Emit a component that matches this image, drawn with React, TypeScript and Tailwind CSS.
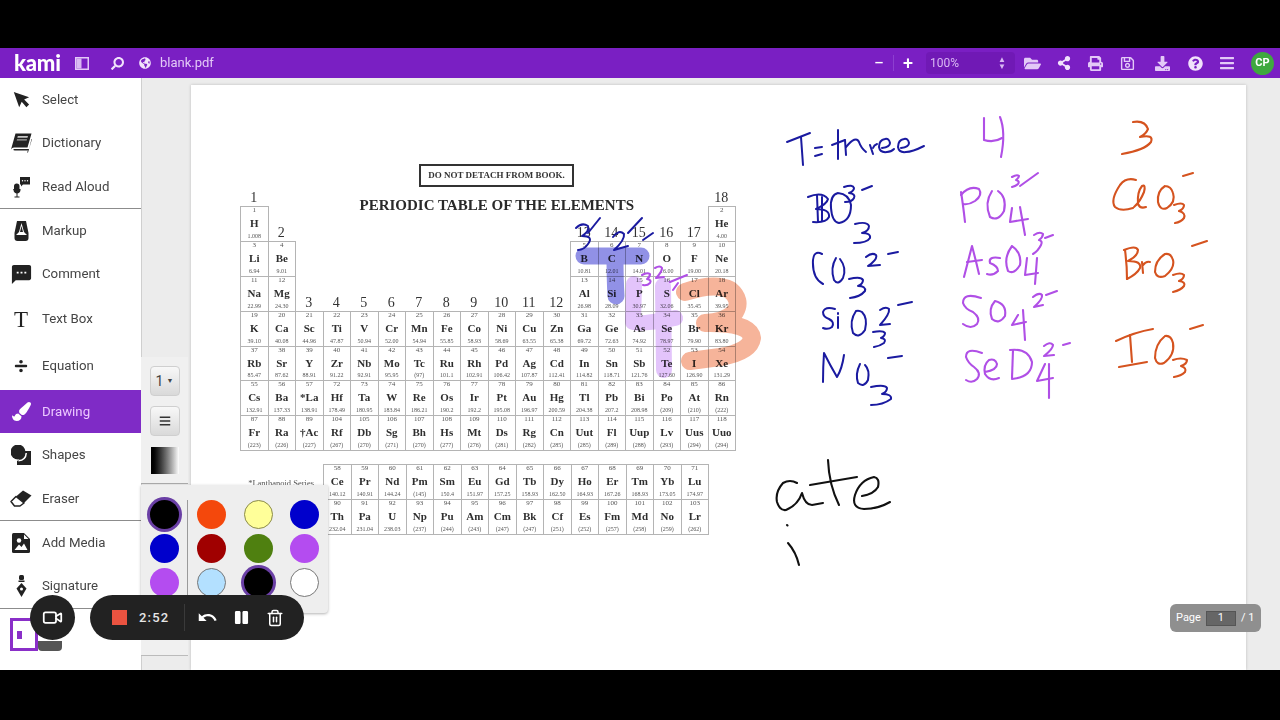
import React from "react";
import {
  FaBars,
  FaDivide,
  FaDownload,
  FaFolderOpen,
  FaGlobeAmericas,
  FaPaintBrush,
  FaPause,
  FaPrint,
  FaQuestionCircle,
  FaRegSave,
  FaSearch,
  FaShareAlt,
} from "react-icons/fa";
import { MdSms, MdUndo } from "react-icons/md";
import { Trash2, Video } from "lucide-react";

// element rows of the table: grid row, first grid column, then "number symbol mass"
const TABLE: { row: number; col: number; els: string[] }[] = [
  { row: 2, col: 1, els: ["1 H 1.008"] },
  { row: 2, col: 18, els: ["2 He 4.00"] },
  { row: 3, col: 1, els: ["3 Li 6.94", "4 Be 9.01"] },
  { row: 3, col: 13, els: ["5 B 10.81", "6 C 12.01", "7 N 14.01", "8 O 16.00", "9 F 19.00", "10 Ne 20.18"] },
  { row: 4, col: 1, els: ["11 Na 22.99", "12 Mg 24.30"] },
  { row: 4, col: 13, els: ["13 Al 26.98", "14 Si 28.09", "15 P 30.97", "16 S 32.06", "17 Cl 35.45", "18 Ar 39.95"] },
  {
    row: 5,
    col: 1,
    els: ["19 K 39.10", "20 Ca 40.08", "21 Sc 44.96", "22 Ti 47.87", "23 V 50.94", "24 Cr 52.00", "25 Mn 54.94", "26 Fe 55.85", "27 Co 58.93", "28 Ni 58.69", "29 Cu 63.55", "30 Zn 65.38", "31 Ga 69.72", "32 Ge 72.63", "33 As 74.92", "34 Se 78.97", "35 Br 79.90", "36 Kr 83.80"],
  },
  {
    row: 6,
    col: 1,
    els: ["37 Rb 85.47", "38 Sr 87.62", "39 Y 88.91", "40 Zr 91.22", "41 Nb 92.91", "42 Mo 95.95", "43 Tc (97)", "44 Ru 101.1", "45 Rh 102.91", "46 Pd 106.42", "47 Ag 107.87", "48 Cd 112.41", "49 In 114.82", "50 Sn 118.71", "51 Sb 121.76", "52 Te 127.60", "53 I 126.90", "54 Xe 131.29"],
  },
  {
    row: 7,
    col: 1,
    els: ["55 Cs 132.91", "56 Ba 137.33", "57 *La 138.91", "72 Hf 178.49", "73 Ta 180.95", "74 W 183.84", "75 Re 186.21", "76 Os 190.2", "77 Ir 192.2", "78 Pt 195.08", "79 Au 196.97", "80 Hg 200.59", "81 Tl 204.38", "82 Pb 207.2", "83 Bi 208.98", "84 Po (209)", "85 At (210)", "86 Rn (222)"],
  },
  {
    row: 8,
    col: 1,
    els: ["87 Fr (223)", "88 Ra (226)", "89 †Ac (227)", "104 Rf (267)", "105 Db (270)", "106 Sg (271)", "107 Bh (270)", "108 Hs (277)", "109 Mt (276)", "110 Ds (281)", "111 Rg (282)", "112 Cn (285)", "113 Uut (285)", "114 Fl (289)", "115 Uup (288)", "116 Lv (293)", "117 Uus (294)", "118 Uuo (294)"],
  },
];

const SERIES: { row: number; col: number; els: string[] }[] = [
  {
    row: 1,
    col: 2,
    els: ["58 Ce 140.12", "59 Pr 140.91", "60 Nd 144.24", "61 Pm (145)", "62 Sm 150.4", "63 Eu 151.97", "64 Gd 157.25", "65 Tb 158.93", "66 Dy 162.50", "67 Ho 164.93", "68 Er 167.26", "69 Tm 168.93", "70 Yb 173.05", "71 Lu 174.97"],
  },
  {
    row: 2,
    col: 2,
    els: ["90 Th 232.04", "91 Pa 231.04", "92 U 238.03", "93 Np (237)", "94 Pu (244)", "95 Am (243)", "96 Cm (247)", "97 Bk (247)", "98 Cf (251)", "99 Es (252)", "100 Fm (257)", "101 Md (258)", "102 No (259)", "103 Lr (262)"],
  },
];

const GROUP_LABELS: [string, number, number][] = [
  ["1", 1, 1],
  ["18", 1, 18],
  ["2", 2, 2],
  ["13", 2, 13],
  ["14", 2, 14],
  ["15", 2, 15],
  ["16", 2, 16],
  ["17", 2, 17],
  ["3", 4, 3],
  ["4", 4, 4],
  ["5", 4, 5],
  ["6", 4, 6],
  ["7", 4, 7],
  ["8", 4, 8],
  ["9", 4, 9],
  ["10", 4, 10],
  ["11", 4, 11],
  ["12", 4, 12],
];

// highlighter strokes, multiplied over the table so its text stays dark
const HIGHLIGHTS: { color: string; width: number; paths: string[] }[] = [
  { color: "#9191e6", width: 17, paths: ["M584 256 L641 256", "M615 256 Q615 280 616 296"] },
  { color: "#e3c4fb", width: 16, paths: ["M634 284 L633 322 Q640 325 675 318", "M663 286 L664 370"] },
  {
    color: "#f6b49a",
    width: 18,
    paths: ["M685 292 Q715 282 730 290 Q742 300 735 312 Q725 322 705 323 Q750 322 752 338 Q750 352 720 357 L690 361"],
  },
];

// pen strokes on the pdf, in page coordinates
const INK: { color: string; width: number; paths: string[] }[] = [
  {
    color: "#1a1aa0",
    width: 2,
    paths: [
      // marks over the table
      "M576 228 q6 -6 12 -2 q2 5 -6 10 q12 0 6 8 q-4 6 -10 6",
      "M588 233 L600 218",
      "M613 237 q6 -8 11 -3 q1 6 -10 16 l14 -4",
      "M628 233 L642 218",
      "M643 240 L653 233",
      // T=three
      "M787 142 L810 133",
      "M801 137 L803 165",
      "M815 148 L822 147",
      "M815 156 L822 154",
      "M838 130 L838 159",
      "M832 145 L845 140",
      "M845 140 L846 155",
      "M846 147 q10 -12 13 -5 q2 6 7 10",
      "M870 145 L873 154",
      "M873 148 q1 -3 4 -4",
      "M882 148 q8 -1 8 -5 q-1 -5 -5 -4 q-6 1 -6 8 q1 6 8 5 q4 0 7 -3",
      "M901 148 q8 -1 8 -5 q-1 -5 -5 -4 q-6 1 -6 8 q1 6 8 5 q6 0 18 -6",
      // BO3
      "M808 197 q14 -6 20 2 q-1 5 -12 10 q14 0 13 8 q-3 6 -16 5",
      "M817 195 L818 222",
      "M822 197 L822 221",
      "M838 193 q-8 2 -7 15 q1 14 8 15 q12 -2 12 -18 q-2 -11 -13 -12",
      "M855 224 q12 -3 14 2 q0 5 -7 7 q9 0 8 5 q-3 5 -16 5",
      "M844 187 q9 -3 10 1 q0 3 -5 5 q7 1 5 5 q-2 4 -9 4",
      "M862 190 L872 186",
      // CO3
      "M822 254 q-8 -4 -9 6 q-1 18 10 24",
      "M836 258 q-6 10 -2 22 q4 6 9 -2 q4 -10 -3 -19",
      "M849 279 q12 -3 14 1 q0 4 -5 6 q8 0 7 5 q-5 6 -15 7",
      "M866 257 q6 -5 10 -2 q2 4 -8 11 l12 -1",
      "M888 254 L898 252",
      // SiO3
      "M835 309 q-10 -3 -12 3 q0 5 6 7 q6 3 3 8 q-4 3 -9 1",
      "M838 317 L838 328",
      "M838 313 L838 314",
      "M856 311 q-7 10 -3 22 q6 6 12 -3 q3 -12 -3 -18 q-3 -2 -6 -1",
      "M873 332 q10 -2 12 1 q0 3 -4 5 q6 1 3 5 q-4 3 -10 4",
      "M880 310 q6 -4 9 -1 q1 5 -9 16 l10 -1",
      "M898 305 L912 302",
      // NO3
      "M823 382 q0 -15 1 -29 q6 12 13 24 q5 -8 7 -22",
      "M860 364 q-5 10 -2 19 q6 5 10 -3 q2 -10 -3 -15",
      "M871 387 q14 -3 16 1 q0 4 -5 6 q10 0 9 5 q-8 6 -20 6",
      "M888 358 L902 356",
    ],
  },
  {
    color: "#b04fe6",
    width: 2.1,
    paths: [
      // marks over the table
      "M642 275 q5 -3 8 -1 q0 3 -3 5 q5 1 3 4 q-3 3 -7 2",
      "M655 268 q5 -3 7 0 q0 4 -6 10 l8 -1",
      "M670 282 L687 275",
      "M673 290 L678 283",
      // 4
      "M984 118 L984 140 q10 3 18 -2",
      "M1000 117 q6 15 1 40",
      // PO4
      "M965 222 q-2 -18 -4 -30",
      "M961 195 q8 -10 18 -6 q4 6 -4 12 q-6 4 -12 3",
      "M992 191 q-8 12 -2 26 q8 5 14 -6 q3 -14 -6 -20",
      "M1012 208 L1010 222 L1028 219",
      "M1020 207 L1025 235",
      "M1012 177 q5 -3 7 -1 q0 2 -3 4 q4 1 2 4 q-2 2 -6 3",
      "M1020 186 L1038 173",
      // AsO4
      "M964 277 L972 246 q4 15 7 28",
      "M967 262 L982 260",
      "M1000 258 q-12 -2 -10 5 q8 3 8 8 q-5 5 -11 3",
      "M1012 246 q-9 12 -4 25 q6 4 12 -6 q2 -12 -8 -19",
      "M1027 258 L1025 275 L1038 273",
      "M1037 258 L1035 284",
      "M1034 235 q6 -4 9 -1 q0 3 -4 6 q4 1 2 5 q-3 6 -8 9",
      "M1045 238 L1053 235",
      // SO4
      "M981 298 q-18 -6 -18 5 q2 6 10 9 q8 6 4 12 q-6 6 -14 0",
      "M995 301 q-7 8 -3 18 q7 6 13 -3 q2 -12 -10 -15",
      "M1018 315 L1012 325 L1026 322",
      "M1023 310 L1025 340",
      "M1033 297 q6 -5 9 -2 q1 4 -8 12 l9 -2",
      "M1046 295 L1057 291",
      // SeO4
      "M982 353 q-16 -6 -16 4 q2 6 8 10 q8 6 3 12 q-5 5 -11 1",
      "M985 372 q12 -2 12 -8 q-2 -6 -8 -4 q-6 5 -4 14 q5 8 14 4",
      "M1013 350 L1012 378",
      "M1010 350 q18 -2 22 12 q0 15 -20 17",
      "M1045 364 L1037 381 L1053 378",
      "M1049 364 L1049 398",
      "M1044 346 q6 -5 9 -1 q0 4 -9 11 l10 -1",
      "M1063 345 L1070 343",
    ],
  },
  {
    color: "#d5531f",
    width: 2.1,
    paths: [
      "M1133 122 q12 -2 15 7 q-2 5 -8 8 q14 -3 11 5 q-6 8 -29 12",
      // ClO3
      "M1136 180 q-10 -3 -16 5 q-10 15 -5 22 q6 5 18 1",
      "M1134 207 q6 -5 10 -15 q2 -8 -2 -6 q-5 6 -4 18 q2 5 8 3",
      "M1165 186 q-8 5 -7 16 q2 9 9 6 q9 -6 6 -15 q-2 -7 -8 -7",
      "M1174 205 q8 -3 10 0 q0 4 -5 6 q7 2 5 7 q-3 4 -9 5",
      "M1183 176 L1193 173",
      // BrO3
      "M1125 250 q2 15 2 29",
      "M1124 250 q12 -5 14 0 q0 6 -10 11 q14 0 12 7 q-3 6 -13 11",
      "M1142 262 L1143 273",
      "M1143 265 q3 -4 7 -3",
      "M1165 254 q-10 6 -10 18 q2 7 10 4 q10 -8 8 -16 q-2 -7 -8 -6",
      "M1173 275 q8 -3 11 0 q0 4 -5 6 q7 1 5 5 q-3 4 -11 6",
      "M1192 246 L1207 241",
      // IO3
      "M1116 341 Q1135 332 1153 329",
      "M1130 335 L1132 362",
      "M1119 367 L1147 362",
      "M1165 336 q-10 8 -10 22 q2 8 9 5 q11 -8 9 -20 q-2 -8 -8 -7",
      "M1173 360 q8 -3 14 0 q0 4 -6 6 q6 2 4 6 q-4 4 -11 5",
      "M1190 329 L1203 325",
    ],
  },
  {
    color: "#111111",
    width: 2.1,
    paths: [
      "M797 483 Q790 479 783 483 Q775 492 777 502 Q780 511 786 510 Q798 505 802 493 Q805 505 812 505 L823 503",
      "M828 460 Q829 485 839 505",
      "M810 485 L857 477",
      "M862 496 Q874 494 878 487 Q880 478 874 477 Q860 480 855 495 Q851 508 864 509 Q878 509 890 502",
      "M787 525 L787.5 525.5",
      "M788 543 Q796 552 799 565",
    ],
  },
];

const SWATCHES: { bg: string; cls: string }[] = [
  { bg: "bg-black", cls: "ring-[3px] ring-[#6a3fa5]" },
  { bg: "bg-[#0000cc]", cls: "" },
  { bg: "bg-[#b44cf0]", cls: "" },
];

function SelectIcon() {
  return (
    <svg width="18" height="18" viewBox="0 0 20 20" fill="#222">
      <path d="M2 1 L8 18 L10.8 12 L16 18 L19 15 L13.5 9.5 L19 7 Z" />
    </svg>
  );
}

function BookIcon() {
  return (
    <svg width="22" height="20" viewBox="0 0 22 20" fill="#222">
      <path d="M5.500 0.500 H21.500 L17.500 14.500 H4 Q2 14.500 1 16.500 Z" />
      <path d="M1 16.500 Q0.500 19.500 4 19.500 H17 L18 17.500 H5 Q3 17.500 3.500 16 H19 L21.500 6 L22 6 L18 19.500 H4 Q0.500 19.500 1 16.500 Z" />
      <path d="M7.800 3 H18 L17.500 4.800 H7.300 Z" fill="#fff" opacity="0.75" />
      <path d="M7 6.200 H17 L16.700 7.400 H6.700 Z" fill="#fff" opacity="0.6" />
    </svg>
  );
}

function ReadAloudIcon() {
  return (
    <svg width="20" height="22" viewBox="0 0 20 22" fill="#222">
      <rect x="3" y="7.500" width="5.500" height="8" rx="2.700" />
      <path d="M2 13 h7.500 v1 a3.700 3.700 0 0 1 -3 3.500 v3 h2 v1 h-5 v-1 h2 v-3 a3.700 3.700 0 0 1 -3 -3.500 Z" />
      <path d="M9 1 h10 v7.500 h-7 l-2 2 v-2 h-1 Z" />
      <circle cx="11.500" cy="4.700" r="0.700" fill="#fff" />
      <circle cx="14" cy="4.700" r="0.700" fill="#fff" />
      <circle cx="16.500" cy="4.700" r="0.700" fill="#fff" />
    </svg>
  );
}

function MarkupIcon() {
  return (
    <svg width="15" height="20" viewBox="0 0 15 20" fill="#222">
      <path d="M3 0 L0.500 12 L0.500 17 Q0.500 20 3.500 20 H11.500 Q14.500 20 14.500 17 L14.500 12 L12 0 Z" />
      <path d="M7.500 2 L10 11 L13 14 H2 L5 11 Z" fill="#fff" />
      <path d="M7.500 5 L9 11 L6 11 Z" fill="#222" />
      <path d="M4 14 H11 L11.500 16 H3.500 Z" fill="#222" />
    </svg>
  );
}

function ShapesIcon() {
  return (
    <svg width="20" height="20" viewBox="0 0 20 20" fill="#222">
      <path d="M10 6 H20 V20 H6 V16 Q10 15 10 6 Z" />
      <circle cx="7" cy="7" r="7.500" />
      <path d="M14.500 8 Q14 14.500 7.500 15 V16.500 Q15.500 16 16 8 Z" fill="#fff" />
    </svg>
  );
}

function EraserIcon() {
  return (
    <svg width="22" height="17" viewBox="0 0 22 17" fill="#222">
      <path d="M13 0.500 L21.500 5.500 L14 13 L6 6.500 Z" />
      <path d="M6 6.500 L14 13 L10 16 H4.500 L1 11.500 Z" fill="#fff" stroke="#222" strokeWidth="1.500" strokeLinejoin="round" />
    </svg>
  );
}

function MediaIcon() {
  return (
    <svg width="18" height="20" viewBox="0 0 18 20" fill="#222">
      <path d="M1.500 0 H12 L18 6 V18.500 Q18 20 16.500 20 H1.500 Q0 20 0 18.500 V1.500 Q0 0 1.500 0 Z" />
      <circle cx="7" cy="7.500" r="2.200" fill="#fff" />
      <path d="M2.500 17 L7 11.500 L9.500 14 L12 10.500 L15.500 17 Z" fill="#fff" />
      <path d="M12 1.500 V6 H16.500 Z" fill="#fff" />
    </svg>
  );
}

function SignatureIcon() {
  return (
    <svg width="11" height="22" viewBox="0 0 11 22" fill="#222">
      <rect x="3" y="0" width="5" height="5" rx="1.500" />
      <rect x="2.500" y="5.500" width="6" height="1.500" />
      <path d="M5.500 8 L10.500 13.500 L5.500 22 L0.500 13.500 Z" />
      <circle cx="5.500" cy="14" r="1.500" fill="#fff" />
    </svg>
  );
}

function PanelIcon() {
  return (
    <svg width="14" height="13" viewBox="0 0 14 13">
      <rect x="0.750" y="0.750" width="12.500" height="11.500" fill="none" stroke="#e3c9f7" strokeWidth="1.500" />
      <rect x="1.500" y="1.500" width="5" height="10" fill="#d9b8f3" />
    </svg>
  );
}

function Cell({ value, style }: { value: string; style: React.CSSProperties }) {
  const [num, sym, mass] = value.split(" ");
  return (
    <div
      style={style}
      className="-mr-px -mb-px flex flex-col items-center overflow-hidden border border-[#b4b4b4] bg-white pb-px leading-none text-[#555]"
    >
      <span className="text-[7px] leading-[7px]">{num}</span>
      <span className="mt-[3px] text-[11px] leading-[12px] font-bold text-[#2f2f2f]">{sym}</span>
      <span className="mt-auto text-[6px] leading-[7px] whitespace-nowrap">{mass}</span>
    </div>
  );
}

function Cells({ rows }: { rows: { row: number; col: number; els: string[] }[] }) {
  return (
    <>
      {rows.map((r) =>
        r.els.map((el, i) => (
          <Cell key={el} value={el} style={{ gridRow: r.row, gridColumn: r.col + i }} />
        )),
      )}
    </>
  );
}

function SideItem({
  icon,
  label,
  h,
  active,
}: {
  icon: React.ReactNode;
  label: string;
  h: string;
  active?: boolean;
}) {
  return (
    <div className={`flex items-center ${h} ${active ? "bg-[#7f2bc6] text-[#ecc8ff]" : "text-[#454545]"}`}>
      <div className="flex w-[42px] shrink-0 justify-center">{icon}</div>
      <span className="text-[13.25px]">{label}</span>
    </div>
  );
}

function Sidebar() {
  return (
    <aside className="flex w-[142px] shrink-0 flex-col border-r border-[#cfcfcf] bg-white">
      <SideItem h="h-[43px]" label="Select" icon={<SelectIcon />} />
      <SideItem h="h-[44px]" label="Dictionary" icon={<BookIcon />} />
      <SideItem h="h-[43px]" label="Read Aloud" icon={<ReadAloudIcon />} />
      <div className="h-px bg-[#8c8c8c]" />
      <SideItem h="h-[43px]" label="Markup" icon={<MarkupIcon />} />
      <SideItem h="h-[44px]" label="Comment" icon={<MdSms className="text-[23px] text-[#222]" />} />
      <SideItem
        h="h-[46px]"
        label="Text Box"
        icon={<span className="font-['Liberation_Serif',serif] text-[23px] leading-none text-[#222]">T</span>}
      />
      <SideItem h="h-[48px]" label="Equation" icon={<FaDivide className="text-[14px] text-[#222]" />} />
      <SideItem active h="h-[43px]" label="Drawing" icon={<FaPaintBrush className="text-[19px] text-white" />} />
      <SideItem h="h-[44px]" label="Shapes" icon={<ShapesIcon />} />
      <SideItem h="h-[43px]" label="Eraser" icon={<EraserIcon />} />
      <div className="h-px bg-[#8c8c8c]" />
      <SideItem h="h-[43px]" label="Add Media" icon={<MediaIcon />} />
      <SideItem h="h-[44px]" label="Signature" icon={<SignatureIcon />} />
      <div className="h-px bg-[#8c8c8c]" />
      {/* extension badge, half covered by the recorder */}
      <div className="flex items-start pt-[9px] pl-[10px]">
        <div className="flex h-[33px] w-[28px] items-center border-[3px] border-[#8a2fc8] bg-white pl-[4px]">
          <div className="h-[8px] w-[5px] bg-[#8a2fc8]" />
        </div>
        <div className="mt-[23px] h-[10px] w-[24px] rounded-b bg-[#555]" />
      </div>
    </aside>
  );
}

function Header() {
  return (
    <header className="flex h-[30px] shrink-0 items-center bg-[#7a1fc3] pr-[6px] pl-[14px] text-[#e3c9f7]">
      <span className="w-[61px] font-['Lato',sans-serif] text-[22px] leading-none font-black tracking-[-0.2px] text-white">
        kami
      </span>
      <PanelIcon />
      <FaSearch className="ml-[22px] -scale-x-100 text-[13px] text-[#f1e2fb]" />
      <FaGlobeAmericas className="ml-[15px] text-[12px] text-[#f1e2fb]" />
      <span className="ml-[9px] text-[13px]">blank.pdf</span>

      <div className="ml-auto flex items-center">
        <span className="text-lg leading-none text-white">−</span>
        <div className="mx-[9px] h-[16px] w-px bg-[#8d3fd0]" />
        <span className="text-lg leading-none font-medium text-white">+</span>
        <div className="mr-[9px] ml-[13px] flex h-[22px] w-[89px] items-center justify-between rounded-sm bg-[#7019b5] pr-[9px] pl-[4px] text-xs text-[#d9b8f3]">
          <span>100%</span>
          <span className="text-[8px] leading-[7px]">
            ▲
            <br />▼
          </span>
        </div>
        <FaFolderOpen className="text-[17px]" />
        <FaShareAlt className="ml-[16px] text-[14px] text-[#f1e2fb]" />
        <FaPrint className="ml-[17px] text-[15px]" />
        <FaRegSave className="ml-[17px] text-[15px]" />
        <FaDownload className="ml-[20px] text-[15px]" />
        <FaQuestionCircle className="ml-[18px] text-[15px] text-[#f1e2fb]" />
        <FaBars className="ml-[16px] text-[16px]" />
        <div className="ml-[16px] flex size-[23px] items-center justify-center rounded-full bg-[#3fa83f] text-[11px] font-bold text-white">
          CP
        </div>
      </div>
    </header>
  );
}

function PdfPage() {
  return (
    <div className="h-full w-[1055px] bg-white pt-[79px] font-['Liberation_Serif',serif] shadow-[0_0_3px_rgba(0,0,0,0.2)]">
      <div className="ml-[228px] flex h-[23px] w-[155px] items-center justify-center border-2 border-[#333] text-[9px] font-bold text-[#333]">
        DO NOT DETACH FROM BOOK.
      </div>
      <div className="ml-[49px] grid w-[495px] grid-cols-[repeat(18,27.5px)] grid-rows-[19px_repeat(7,34.9px)] blur-[0.3px]">
        {GROUP_LABELS.map(([label, row, col]) => (
          <div
            key={label}
            style={{ gridRow: row, gridColumn: col }}
            className="self-end text-center text-sm leading-4 text-[#333]"
          >
            {label}
          </div>
        ))}
        <div className="col-start-3 col-end-18 row-span-2 row-start-1 pt-[9px] pr-[9px] text-center text-[15px] leading-[18px] font-bold text-[#2a2a2a]">
          PERIODIC TABLE OF THE ELEMENTS
        </div>
        <Cells rows={TABLE} />
      </div>
      <div className="mt-[14px] ml-[49px] grid w-[468px] grid-cols-[83px_repeat(14,27.5px)] grid-rows-[35px_35px] blur-[0.3px]">
        <div className="col-start-1 row-start-1 self-center pt-[3px] pr-[9px] text-right text-[8.5px] whitespace-nowrap text-[#555]">
          *Lanthanoid Series
        </div>
        <div className="col-start-1 row-start-2 self-center pr-[9px] text-right text-[8.5px] whitespace-nowrap text-[#555]">
          †Actinoid Series
        </div>
        <Cells rows={SERIES} />
      </div>
    </div>
  );
}

function DrawingOptions() {
  return (
    <>
      <div className="absolute top-[357px] left-[141px] flex h-[127px] w-[47px] flex-col items-center border-b border-[#aaa] bg-[#f0f0f0] pt-[9px]">
        <div className="flex h-[30px] w-[30px] items-center justify-center gap-[3px] rounded border border-[#cfcfcf] bg-linear-to-b from-[#f8f8f8] to-[#d9d9d9] text-sm text-[#444]">
          1<span className="text-[7px]">▼</span>
        </div>
        <div className="mt-[10px] flex h-[30px] w-[30px] items-center justify-center rounded border border-[#cfcfcf] bg-linear-to-b from-[#f8f8f8] to-[#d9d9d9]">
          <FaBars className="text-[12px] text-[#333]" />
        </div>
        <div className="mt-[11px] h-[27px] w-[28px] bg-linear-to-r from-black to-white" />
      </div>
      <div className="absolute top-[485px] left-[141px] flex h-[128px] w-[187px] rounded-br bg-[#eeeeee] pt-[15px] shadow-[0_1px_3px_rgba(0,0,0,0.3)]">
        <div className="flex w-[47px] flex-col items-center gap-[5px] border-r border-[#9a9a9a] pb-[14px] pl-[1px]">
          {SWATCHES.map((s) => (
            <div key={s.bg} className={`size-[29px] rounded-full ${s.bg} ${s.cls}`} />
          ))}
        </div>
        <div className="grid grid-cols-[repeat(3,29px)] grid-rows-[repeat(3,29px)] gap-x-[17.5px] gap-y-[5px] pl-[9px]">
          <div className="rounded-full bg-[#f4480c]" />
          <div className="rounded-full border border-[#8a8a4a] bg-[#ffff99]" />
          <div className="rounded-full bg-[#0000cc]" />
          <div className="rounded-full bg-[#a00000]" />
          <div className="rounded-full bg-[#4f8010]" />
          <div className="rounded-full bg-[#b44cf0]" />
          <div className="rounded-full border border-[#777] bg-[#b3e0ff]" />
          <div className="rounded-full bg-black ring-[3px] ring-[#6a3fa5]" />
          <div className="rounded-full border border-[#777] bg-white" />
        </div>
      </div>
      <div className="absolute top-[613px] left-[141px] h-[43px] w-[47px] border-b border-[#bbb] bg-[#f0f0f0]" />
    </>
  );
}

function Recorder() {
  return (
    <>
      <div className="absolute top-[595px] left-[30px] flex size-[45px] items-center justify-center rounded-full bg-[#222]">
        <Video className="size-[21px] text-white" strokeWidth={2} />
      </div>
      <div className="absolute top-[595px] left-[90px] flex h-[45px] w-[214px] items-center rounded-full bg-[#222] pl-[22px] text-white">
        <div className="size-[15px] bg-[#ea5340]" />
        <span className="ml-[12px] w-[34px] text-[13px] font-medium tracking-[1.2px] text-[#e6e6e6]">2:52</span>
        <div className="ml-[11px] h-[27px] w-px bg-[#3a3a3a]" />
        <MdUndo className="ml-[12px] text-[21px]" />
        <FaPause className="ml-[16px] text-[15px]" />
        <Trash2 className="ml-[17px] size-[18px]" strokeWidth={2} />
      </div>
    </>
  );
}

function PageBadge() {
  return (
    <div className="absolute top-[604px] left-[1170px] flex h-[28px] w-[91px] items-center rounded-md bg-[#8f8f8f] pl-[6px] text-[11px] text-white">
      Page
      <div className="mx-[5px] flex h-[15px] w-[30px] items-center justify-center border border-[#555] bg-[#666]">1</div>
      / 1
    </div>
  );
}

export default function App() {
  return (
    <div className="relative flex h-[720px] w-[1280px] flex-col overflow-hidden bg-black font-['Roboto',sans-serif]">
      <div className="h-12 shrink-0 bg-black" />
      <Header />
      <main className="flex h-[592px] shrink-0">
        <Sidebar />
        <div className="flex-1 bg-[#ececec] pt-[7px] pl-[49px]">
          <PdfPage />
        </div>
      </main>

      {/* highlighter and pen annotations lie over the pdf */}
      <svg
        className="pointer-events-none absolute top-0 left-0 mix-blend-multiply"
        width="1280"
        height="720"
        viewBox="0 0 1280 720"
        fill="none"
        strokeLinecap="round"
        strokeLinejoin="round"
        aria-hidden="true"
      >
        {HIGHLIGHTS.map((group) => (
          <g key={group.color} stroke={group.color} strokeWidth={group.width}>
            {group.paths.map((d) => (
              <path key={d} d={d} />
            ))}
          </g>
        ))}
      </svg>
      <svg
        className="pointer-events-none absolute top-0 left-0"
        width="1280"
        height="720"
        viewBox="0 0 1280 720"
        fill="none"
        strokeLinecap="round"
        strokeLinejoin="round"
        role="img"
        aria-label="Handwritten pen annotations"
      >
        {INK.map((group) => (
          <g key={group.color} stroke={group.color} strokeWidth={group.width}>
            {group.paths.map((d) => (
              <path key={d} d={d} />
            ))}
          </g>
        ))}
      </svg>

      <DrawingOptions />
      <Recorder />
      <PageBadge />
    </div>
  );
}
